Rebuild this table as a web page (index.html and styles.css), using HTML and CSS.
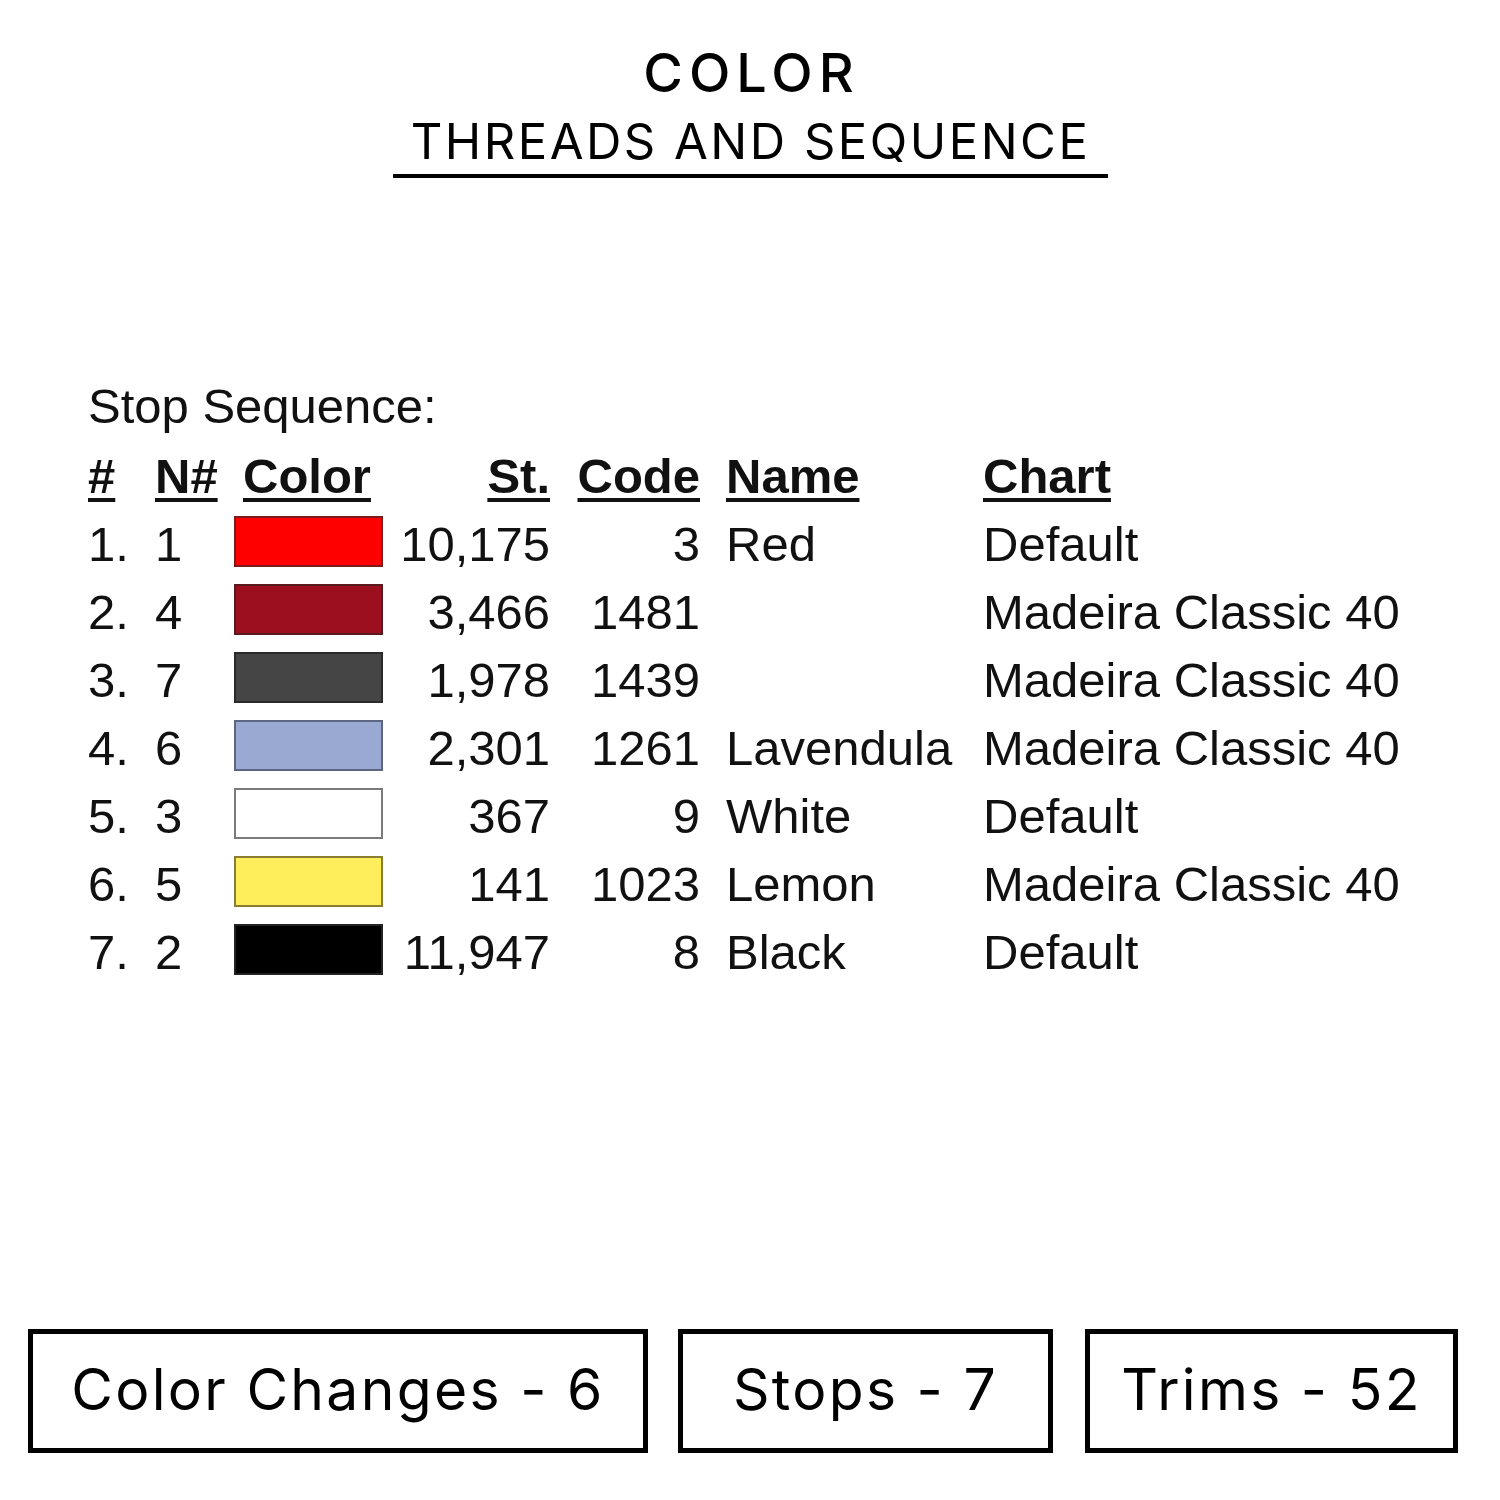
FILE: index.html
```html
<!DOCTYPE html>
<html>
<head>
<meta charset="utf-8">
<link rel="stylesheet" href="styles.css">
</head>
<body>
<div class="page">
  <header class="head">
    <div class="head-inner">
      <div class="title">COLOR</div>
      <div class="subtitle">THREADS AND SEQUENCE</div>
    </div>
  </header>

  <section class="seq">
    <div class="seq-title">Stop Sequence:</div>
    <div class="row hdr">
      <div class="c1"><u>#</u></div>
      <div class="c2"><u>N#</u></div>
      <div class="c3 hcolor"><u>Color</u></div>
      <div class="c4"><u>St.</u></div>
      <div class="c5"><u>Code</u></div>
      <div class="c6"><u>Name</u></div>
      <div class="c7"><u>Chart</u></div>
    </div>
    <div class="row">
      <div class="c1">1.</div><div class="c2">1</div>
      <div class="c3"><span class="sw sw-red"></span></div>
      <div class="c4">10,175</div><div class="c5">3</div><div class="c6">Red</div><div class="c7">Default</div>
    </div>
    <div class="row">
      <div class="c1">2.</div><div class="c2">4</div>
      <div class="c3"><span class="sw sw-maroon"></span></div>
      <div class="c4">3,466</div><div class="c5">1481</div><div class="c6"></div><div class="c7">Madeira Classic 40</div>
    </div>
    <div class="row">
      <div class="c1">3.</div><div class="c2">7</div>
      <div class="c3"><span class="sw sw-gray"></span></div>
      <div class="c4">1,978</div><div class="c5">1439</div><div class="c6"></div><div class="c7">Madeira Classic 40</div>
    </div>
    <div class="row">
      <div class="c1">4.</div><div class="c2">6</div>
      <div class="c3"><span class="sw sw-lav"></span></div>
      <div class="c4">2,301</div><div class="c5">1261</div><div class="c6">Lavendula</div><div class="c7">Madeira Classic 40</div>
    </div>
    <div class="row">
      <div class="c1">5.</div><div class="c2">3</div>
      <div class="c3"><span class="sw sw-white"></span></div>
      <div class="c4">367</div><div class="c5">9</div><div class="c6">White</div><div class="c7">Default</div>
    </div>
    <div class="row">
      <div class="c1">6.</div><div class="c2">5</div>
      <div class="c3"><span class="sw sw-yellow"></span></div>
      <div class="c4">141</div><div class="c5">1023</div><div class="c6">Lemon</div><div class="c7">Madeira Classic 40</div>
    </div>
    <div class="row">
      <div class="c1">7.</div><div class="c2">2</div>
      <div class="c3"><span class="sw sw-black"></span></div>
      <div class="c4">11,947</div><div class="c5">8</div><div class="c6">Black</div><div class="c7">Default</div>
    </div>
  </section>

  <footer class="stats">
    <div class="box box-1">Color Changes - 6</div>
    <div class="box box-2">Stops - 7</div>
    <div class="box box-3">Trims - 52</div>
  </footer>
</div>
</body>
</html>
```

FILE: styles.css
```css
* { box-sizing: border-box; }
html, body { margin: 0; padding: 0; background: #fff; }
body { width: 1500px; height: 1500px; overflow: hidden; color: #000; }

.page {
  width: 1500px;
  height: 1500px;
  display: flex;
  flex-direction: column;
}

.head {
  display: flex;
  justify-content: center;
  padding-top: 42px;
}
.head-inner {
  width: 715px;
  margin-left: 1px;
  border-bottom: 4px solid #000;
  text-align: center;
  font-family: Inter, "Noto Sans", sans-serif;
}
.title {
  font-size: 54px;
  font-weight: 500;
  line-height: 62px;
  letter-spacing: 6px;
  padding-left: 2px;
}
.subtitle {
  font-size: 49px;
  font-weight: 400;
  line-height: 64px;
  letter-spacing: 2.5px;
  padding-top: 6px;
  padding-bottom: 0;
}

.seq {
  margin-top: 194px;
  margin-left: 88px;
  font-family: "Liberation Sans", Arial, sans-serif;
  font-size: 49px;
  color: #111;
}
.seq-title {
  line-height: 68px;
  height: 70px;
}
.row {
  display: grid;
  grid-template-columns: 67px 79px 149px 167px 150px 283px auto;
  height: 68px;
  line-height: 68px;
  white-space: nowrap;
}
.hdr { font-weight: 700; }
.hdr u {
  text-decoration: underline;
  text-decoration-thickness: 4px;
  text-underline-offset: 5px;
}
.hcolor { padding-left: 9px; }
.c4, .c5 { text-align: right; }
.c6 { padding-left: 26px; }

.sw {
  display: block;
  width: 149px;
  height: 51px;
  margin-top: 6px;
  border: 2px solid #333;
}
.sw-red { background: #ff0000; border-color: #7d1b1b; }
.sw-maroon { background: #9c0f1f; border-color: #5a1a20; }
.sw-gray { background: #454545; border-color: #2a2a2a; }
.sw-lav { background: #99a9d2; border-color: #5c6683; }
.sw-white { background: #ffffff; border-color: #7a7a7a; }
.sw-yellow { background: #ffee5c; border-color: #8a7d32; }
.sw-black { background: #000000; border-color: #222; }

.stats {
  margin-top: auto;
  margin-bottom: 47px;
  margin-left: 28px;
  display: flex;
  font-family: Inter, "Noto Sans", sans-serif;
  font-size: 57px;
  font-weight: 400;
  letter-spacing: 2.3px;
}
.box {
  height: 124px;
  border: 5px solid #000;
  display: flex;
  align-items: center;
  justify-content: center;
  padding-bottom: 4px;
}
.box-1 { width: 620px; }
.box-2 { width: 375px; margin-left: 30px; }
.box-3 { width: 373px; margin-left: 32px; }
```
